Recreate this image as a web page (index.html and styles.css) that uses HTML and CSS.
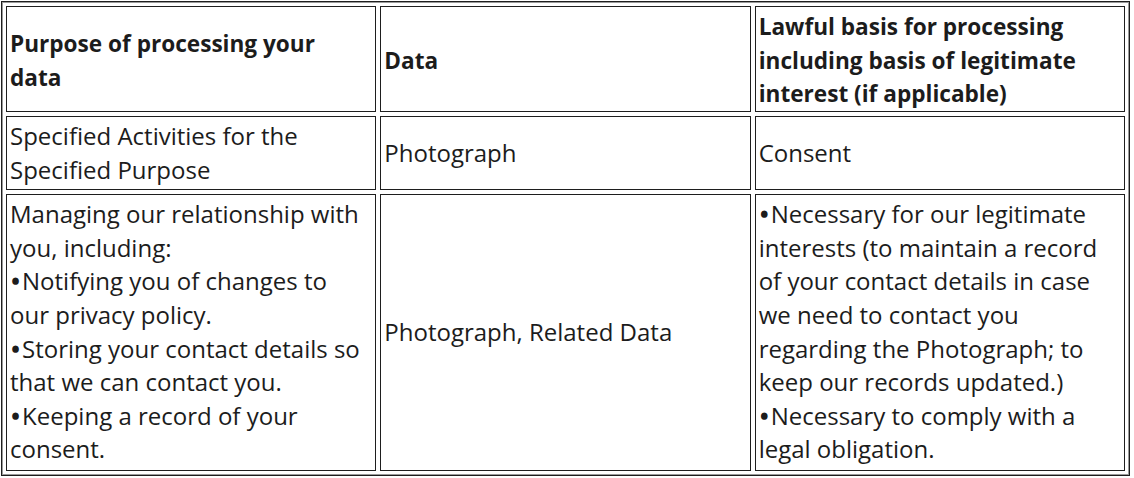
FILE: index.html
```html
<!DOCTYPE html>
<html>
<head>
<meta charset="utf-8">
<link rel="stylesheet" href="styles.css">
</head>
<body>
<table class="grid">
  <tr class="head">
    <th>Purpose of processing your data</th>
    <th>Data</th>
    <th>Lawful basis for processing including basis of legitimate interest (if applicable)</th>
  </tr>
  <tr class="r2">
    <td>Specified Activities for the Specified Purpose</td>
    <td>Photograph</td>
    <td>Consent</td>
  </tr>
  <tr class="r3">
    <td>
      <p class="line">Managing our relationship with you, including:</p>
      <ul class="bullets">
        <li>Notifying you of changes to our privacy policy.</li>
        <li>Storing your contact details so that we can contact you.</li>
        <li>Keeping a record of your consent.</li>
      </ul>
    </td>
    <td>Photograph, Related Data</td>
    <td>
      <ul class="bullets">
        <li>Necessary for our legitimate interests (to maintain a record of your contact details in case we need to contact you regarding the Photograph; to keep our records updated.)</li>
        <li>Necessary to comply with a legal obligation.</li>
      </ul>
    </td>
  </tr>
</table>
</body>
</html>
```
FILE: styles.css
```css
html, body {
  margin: 0;
  padding: 0;
  background: #fff;
}
.grid {
  margin: 1px;
  width: 1129px;
  border: 1px solid #1e1e1e;
  box-shadow: inset 1px 1px 0 #9a9a9a, inset -1px -1px 0 #9a9a9a;
  border-spacing: 4px;
  table-layout: fixed;
  font-family: "Open Sans", "Noto Sans", sans-serif;
  font-size: 24px;
  line-height: 33.6px;
  color: #1c1c1c;
}
.grid th, .grid td {
  border: 1px solid #1e1e1e;
  padding: 0 10px 0 3px;
  text-align: left;
  vertical-align: middle;
}
.grid th {
  font-weight: 700;
  font-size: 22.6px;
  padding-top: 3px;
}
.line {
  margin: 0;
}
.bullets {
  margin: 0;
  padding: 0;
  list-style: none;
}
.bullets li::before {
  content: "•";
  -webkit-text-stroke: 1.6px currentColor;
  padding: 0 2px 0 1px;
}
.head th { height: 101px; }
.r2 td { height: 72px; }
.r3 td {
  height: 273px;
  padding-bottom: 2px;
}
```
